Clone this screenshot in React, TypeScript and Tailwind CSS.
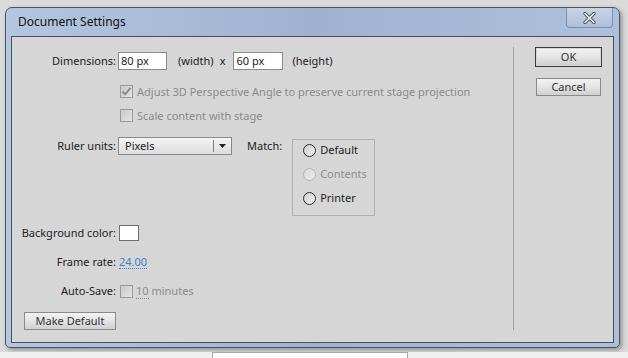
import React from "react";

function Checkbox({ checked = false }: { checked?: boolean }) {
  return (
    <span className="relative flex h-[13px] w-[13px] shrink-0 items-center justify-center border border-[#9a9a9a] bg-gradient-to-br from-[#c8c8c8] to-[#e4e4e4]">
      {checked && (
        <svg width="11" height="11" viewBox="0 0 11 11">
          <path d="M1.5 5.5 L4.2 8.3 L9.5 1.8" fill="none" stroke="#8c8c8c" strokeWidth="2" />
        </svg>
      )}
    </span>
  );
}

function Radio({ label, disabled = false }: { label: string; disabled?: boolean }) {
  return (
    <div className="flex h-[14px] items-center gap-[4px]">
      <span
        className={
          disabled
            ? "h-[13px] w-[13px] rounded-full border border-[#b4b4b4] bg-gradient-to-br from-[#d8d8d8] to-[#ececec]"
            : "h-[13px] w-[13px] rounded-full border border-[#2e2e2e] bg-gradient-to-br from-[#cfcfcf] to-[#f2f2f2]"
        }
      />
      <span className={disabled ? "text-[#8e8e8e]" : "text-[#222]"}>{label}</span>
    </div>
  );
}

function Button({ children, className = "" }: { children: React.ReactNode; className?: string }) {
  return (
    <div
      className={
        "flex items-center justify-center border border-[#8a8a8a] bg-gradient-to-b from-[#f2f2f2] via-[#e4e4e4] to-[#cfcfcf] text-[#333] " +
        className
      }
    >
      {children}
    </div>
  );
}

export default function App() {
  return (
    <div className="h-[358px] w-[628px] overflow-hidden bg-[#dadada] font-['Noto_Sans',Arial,sans-serif] text-[11px] leading-[14px] text-[#222]">
      <div className="pl-[5px] pt-[7px]">
        {/* window frame */}
        <div className="h-[341px] w-[615px] rounded-t-[7px] rounded-b-[5px] border border-[#4b5360] bg-gradient-to-r from-[#b3c6df] via-[#9fb3d1] to-[#adc0db] px-[5px] pb-[5px] shadow-[2px_2px_4px_rgba(0,0,0,0.35)]">
          <div className="flex h-[28px] items-start justify-between">
            <span className="pl-[7px] pt-[6px] text-[12px] leading-[16px] text-[#111]">Document Settings</span>
            <div className="mr-[1px] flex h-[20px] w-[47px] items-center justify-center rounded-b-[4px] border border-t-0 border-[#7f8ea6] bg-gradient-to-b from-[#c7d4e6] to-[#aebfd8]">
              <svg width="13" height="12" viewBox="0 0 13 12">
                <path d="M2 1.5 L11 10.5 M11 1.5 L2 10.5" stroke="#4a4f57" strokeWidth="3.2" strokeLinecap="round" />
                <path d="M2 1.5 L11 10.5 M11 1.5 L2 10.5" stroke="#f4f4f4" strokeWidth="1.5" strokeLinecap="round" />
              </svg>
            </div>
          </div>

          {/* client area */}
          <div className="flex h-[307px] border border-[#46505d] bg-[#d6d6d6]">
            <div className="w-[501px]">
              <div className="mt-[15px] flex h-[18px] items-center">
                <span className="w-[104px] text-right">Dimensions:</span>
                <div className="ml-[2px] flex h-[18px] w-[49px] items-center border border-[#8c8c8c] bg-white pl-[2px]">80 px</div>
                <span className="ml-[11px]">(width)</span>
                <span className="ml-[6px]">x</span>
                <div className="ml-[8px] flex h-[18px] w-[50px] items-center border border-[#8c8c8c] bg-white pl-[2px]">60 px</div>
                <span className="ml-[9px]">(height)</span>
              </div>

              <div className="mt-[15px] flex h-[13px] items-center pl-[108px]">
                <Checkbox checked />
                <span className="ml-[4px] text-[#8a8a8a]">Adjust 3D Perspective Angle to preserve current stage projection</span>
              </div>
              <div className="mt-[11px] flex h-[13px] items-center pl-[108px]">
                <Checkbox />
                <span className="ml-[4px] text-[#8a8a8a]">Scale content with stage</span>
              </div>

              <div className="mt-[15px] flex items-start">
                <span className="flex h-[18px] w-[104px] items-center justify-end">Ruler units:</span>
                <div className="ml-[2px] flex h-[18px] w-[114px] items-center border border-[#8a8a8a] bg-gradient-to-b from-[#f4f4f4] to-[#dcdcdc]">
                  <span className="flex-1 pl-[6px]">Pixels</span>
                  <span className="h-[12px] w-px bg-[#7c7c7c]" />
                  <svg width="17" height="8" viewBox="0 0 17 8">
                    <path d="M5 2 L12 2 L8.5 6 Z" fill="#222" />
                  </svg>
                </div>
                <span className="ml-[15px] flex h-[18px] items-center">Match:</span>
                <div className="ml-[10px] mt-[2px] flex h-[77px] w-[83px] flex-col gap-[10px] border border-[#b0b0b0] pl-[10px] pt-[3px]">
                  <Radio label="Default" />
                  <Radio label="Contents" disabled />
                  <Radio label="Printer" />
                </div>
              </div>

              <div className="mt-[9px] flex h-[16px] items-center">
                <span className="w-[104px] text-right">Background color:</span>
                <div className="ml-[3px] h-[16px] w-[20px] border border-[#6e6e6e] bg-white" />
              </div>

              <div className="mt-[13px] flex h-[16px] items-center">
                <span className="w-[104px] text-right">Frame rate:</span>
                <span className="ml-[3px] border-b border-dotted border-[#3c82c8] leading-[13px] text-[#3c82c8]">24.00</span>
              </div>

              <div className="mt-[13px] flex h-[16px] items-center">
                <span className="w-[104px] text-right">Auto-Save:</span>
                <span className="ml-[4px]">
                  <Checkbox />
                </span>
                <span className="ml-[3px] text-[#8a8a8a]">
                  <span className="border-b border-dotted border-[#8a8a8a]">10</span> minutes
                </span>
              </div>

              <div className="mt-[13px] pl-[12px]">
                <Button className="h-[18px] w-[92px]">Make Default</Button>
              </div>
            </div>

            <div className="mt-[10px] h-[283px] w-px bg-[#a2a2a2]" />

            <div className="flex flex-col pl-[21px] pt-[10px]">
              <div className="h-[20px] w-[67px] border border-[#3c3c3c]">
                <Button className="h-full w-full border-[#d8d8d8]">OK</Button>
              </div>
              <Button className="ml-[1px] mt-[11px] h-[18px] w-[65px]">Cancel</Button>
            </div>
          </div>
        </div>
      </div>
      <div className="mt-[4px] h-[10px] bg-[#efefef] pl-[212px]">
        <div className="mt-[4px] h-[6px] w-[196px] border border-b-0 border-[#a8a8a8] bg-white" />
      </div>
    </div>
  );
}
